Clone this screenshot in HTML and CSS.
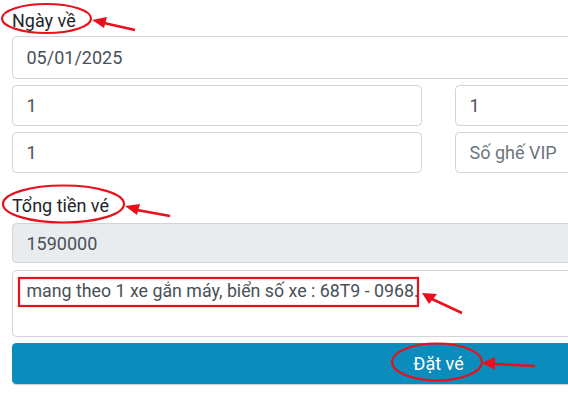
FILE: index.html
```html
<!DOCTYPE html>
<html lang="vi">
<head>
  <meta charset="UTF-8" />
  <meta name="viewport" content="width=device-width, initial-scale=1.0" />
  <title>Đặt vé</title>
  <link rel="stylesheet" href="styles.css">
</head>
<body>
  <form class="booking">
    <label class="field-label first">Ngày về</label>
    <input class="form-control" type="text" value="05/01/2025">

    <div class="seat-grid">
      <input class="form-control short" type="text" value="1">
      <input class="form-control short" type="text" value="1">
      <input class="form-control short" type="text" value="1">
      <input class="form-control short" type="text" placeholder="Số ghế VIP">
    </div>

    <label class="field-label">Tổng tiền vé</label>
    <input class="form-control readonly" type="text" value="1590000" readonly>

    <textarea class="form-control note">mang theo 1 xe gắn máy, biển số xe : 68T9 - 0968.</textarea>

    <button class="btn-book" type="button">Đặt vé</button>
  </form>

  <!-- chú thích đỏ -->
  <svg class="marks" width="568" height="396" viewBox="0 0 568 396">
    <g fill="none" stroke="#e8101a" stroke-width="2.2">
      <ellipse cx="46.5" cy="18.5" rx="44.5" ry="14.5" />
      <ellipse cx="63.5" cy="204" rx="60.5" ry="18.5" />
      <ellipse cx="437" cy="362" rx="45" ry="18.5" />
      <rect x="19" y="278" width="399" height="28" />
    </g>
    <g fill="none" stroke="#e8101a" stroke-width="2.5">
      <line x1="104" y1="23" x2="135" y2="30" />
      <line x1="137" y1="210" x2="170" y2="216" />
      <line x1="432" y1="299" x2="462" y2="313" />
      <line x1="494" y1="364" x2="535" y2="366" />
    </g>
    <g fill="#e8101a">
      <polygon points="92,20 107,17 104,28" />
      <polygon points="125,206 140,204 137,215" />
      <polygon points="422,293 437,294 429,304" />
      <polygon points="482,363 495,357 495,370" />
    </g>
  </svg>
</body>
</html>
```

FILE: styles.css
```css
* {
  margin: 0;
  padding: 0;
  box-sizing: border-box;
}
html, body {
  overflow: hidden;
}
body {
  position: relative;
  width: 568px;
  height: 396px;
  background: #fff;
  font-family: Roboto, 'Liberation Sans', sans-serif;
  font-size: 18px;
  color: #212529;
}
.booking {
  width: 853px;
  margin-left: 12px;
  display: flex;
  flex-direction: column;
}
.field-label {
  display: block;
  line-height: 27px;
  margin-top: 19px;
  margin-bottom: 4px;
}
.field-label.first {
  margin-top: 7px;
  margin-bottom: 2px;
}
.form-control {
  display: block;
  width: 100%;
  height: 43px;
  padding: 0 13.5px;
  font-family: inherit;
  font-size: 18px;
  line-height: 27px;
  color: #495057;
  background: #fff;
  border: 1px solid #ced4da;
  border-radius: 4.5px;
  outline: none;
}
.form-control::placeholder {
  color: #6c757d;
}
.seat-grid {
  display: grid;
  grid-template-columns: 1fr 1fr;
  column-gap: 33px;
  row-gap: 6px;
  margin-top: 6px;
}
.form-control.short {
  height: 41px;
}
.form-control.readonly {
  height: 40px;
  background: #e9ecef;
}
.note {
  height: 67px;
  margin-top: 7px;
  padding-top: 6px;
  font-size: 17.8px;
  resize: none;
  overflow: hidden;
}
.btn-book {
  height: 41px;
  margin-top: 6px;
  border: none;
  border-radius: 4.5px;
  background: #0a8cbc;
  color: #fff;
  font-family: inherit;
  font-size: 18px;
  line-height: 27px;
  box-shadow: 0 1px 1px rgba(0, 0, 0, 0.2);
}
.marks {
  position: absolute;
  top: 0;
  left: 0;
  pointer-events: none;
}
```
